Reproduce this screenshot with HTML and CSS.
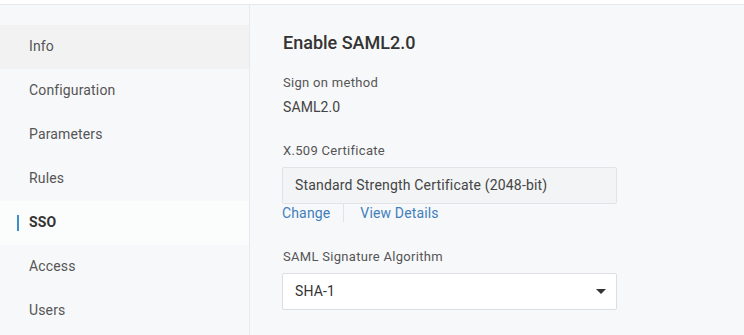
FILE: index.html
```html
<!DOCTYPE html>
<html>
<head>
<meta charset="utf-8">
<link rel="stylesheet" href="styles.css">
</head>
<body>
<div class="topbar"></div>
<div class="layout">
  <nav class="sidebar">
    <div class="nav-item hover">Info</div>
    <div class="nav-item">Configuration</div>
    <div class="nav-item">Parameters</div>
    <div class="nav-item">Rules</div>
    <div class="nav-item active">SSO</div>
    <div class="nav-item">Access</div>
    <div class="nav-item">Users</div>
  </nav>
  <main class="content">
    <h1 class="title">Enable SAML2.0</h1>
    <div class="label first">Sign on method</div>
    <div class="value">SAML2.0</div>
    <div class="label cert-label">X.509 Certificate</div>
    <div class="cert-box">Standard Strength Certificate (2048-bit)</div>
    <div class="links">
      <a class="link change">Change</a><a class="link details">View Details</a>
    </div>
    <div class="label algo-label">SAML Signature Algorithm</div>
    <div class="select">
      <span>SHA-1</span>
      <span class="caret"></span>
    </div>
  </main>
</div>
</body>
</html>
```
FILE: styles.css
```css
html, body {
  margin: 0;
  padding: 0;
}
body {
  width: 744px;
  height: 335px;
  overflow: hidden;
  background: #f7f8fa;
  font-family: Roboto, "Liberation Sans", sans-serif;
  color: #444;
}
.topbar {
  height: 4px;
  background: #ffffff;
  border-bottom: 1px solid #e6e8eb;
}
.layout {
  display: flex;
  height: 330px;
}
.sidebar {
  width: 249px;
  border-right: 1px solid #e8e9ec;
  padding-top: 20px;
  box-sizing: content-box;
  flex: none;
}
.nav-item {
  position: relative;
  height: 44px;
  line-height: 42px;
  padding-left: 29px;
  font-size: 14px;
  letter-spacing: 0.15px;
  color: #555;
}
.nav-item.hover {
  background: #f2f2f3;
}
.nav-item.active {
  background: #fbfcfc;
  font-weight: 700;
  color: #333;
}
.nav-item.active::before {
  content: "";
  position: absolute;
  left: 17px;
  top: 14px;
  width: 2px;
  height: 16px;
  background: #3d8fcc;
}
.content {
  flex: 1;
  padding: 26px 32px 0 32px;
}
.title {
  margin: 0;
  font-size: 18px;
  line-height: 24px;
  font-weight: 500;
  color: #333;
  padding-left: 1px;
}
.label {
  font-size: 13px;
  line-height: 18px;
  letter-spacing: 0.3px;
  color: #555;
  padding-left: 1px;
}
.label.first {
  margin-top: 19px;
}
.value {
  margin-top: 5px;
  font-size: 14px;
  line-height: 20px;
  letter-spacing: 0.1px;
  color: #444;
  padding-left: 1px;
}
.cert-label {
  margin-top: 25px;
}
.cert-box {
  margin-top: 7px;
  height: 35px;
  line-height: 35px;
  border: 1px solid #e1e3e6;
  border-radius: 2px;
  background: #f2f4f5;
  padding-left: 12px;
  font-size: 14px;
  letter-spacing: 0.18px;
  color: #444;
  box-sizing: content-box;
  width: 321px;
}
.links {
  display: flex;
  font-size: 14px;
  line-height: 18px;
  letter-spacing: 0.15px;
}
.link {
  color: #3f7fbd;
}
.change {
  padding-right: 13px;
}
.details {
  border-left: 1px solid #e1e3e6;
  padding-left: 16px;
}
.algo-label {
  margin-top: 26px;
}
.select {
  margin-top: 7px;
  width: 321px;
  height: 35px;
  border: 1px solid #dcdee1;
  border-radius: 2px;
  background: #ffffff;
  padding-left: 12px;
  display: flex;
  align-items: center;
  justify-content: space-between;
  font-size: 14px;
  line-height: 35px;
  letter-spacing: 0.15px;
  color: #333;
}
.caret {
  width: 0;
  height: 0;
  border-left: 5px solid transparent;
  border-right: 5px solid transparent;
  border-top: 5px solid #333;
  margin-right: 10px;
}
```
